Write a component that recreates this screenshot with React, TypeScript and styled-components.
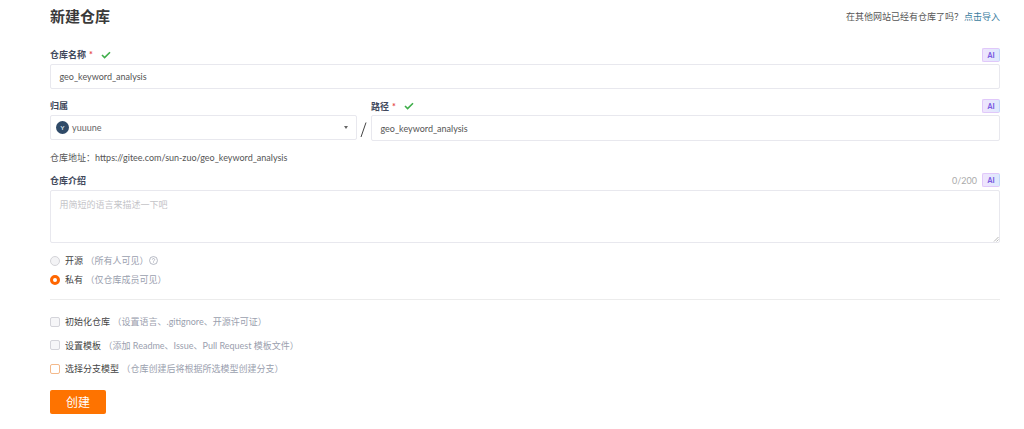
import React from "react";
import styled, { createGlobalStyle } from "styled-components";

const Global = createGlobalStyle`
  html, body { margin: 0; padding: 0; background: #fff; }
  body { font-family: Lato, "Noto Sans CJK SC", sans-serif; color: #40485b; overflow: hidden; }
`;
const Page = styled.div`
  width: 950px; height: 429px; margin-left: 50px; display: flex; flex-direction: column;
`;
const Header = styled.div`
  height: 35px; margin-top: -1px; display: flex; justify-content: space-between; align-items: center;
`;
const Title = styled.h1`
  margin: 0; font-size: 15px; font-weight: 700; color: #3a3a3a; line-height: 35px;
`;
const ImportNote = styled.div`
  font-size: 9px; color: #555;
`;
const ImportLink = styled.span`
  color: #3b7c9e; margin-left: 1px;
`;
const LabelRow = styled.div`
  height: 16px; display: flex; align-items: center; justify-content: space-between;
`;
const FirstLabelRow = styled(LabelRow)`
  height: 13px; margin-top: 14px;
`;
const Label = styled.div`
  display: flex; align-items: center; font-size: 9px; font-weight: 700; color: #40485b;
`;
const Star = styled.span`
  color: #e5484d; margin-left: 3px;
`;
const Check = styled.svg`
  width: 10px; height: 8px; margin-left: 8px;
`;
const Badge = styled.div`
  width: 18px; height: 14px; box-sizing: border-box; border: 1px solid #e0c8fa; border-right-color: #c4d8fb; border-radius: 2px;
  background: linear-gradient(90deg, #f0e4fd, #dde9fd); color: #7a5be0; font-size: 7px; font-weight: 900;
  display: flex; align-items: center; justify-content: center;
`;
const Counter = styled.span`
  font-size: 9px; color: #aaa; margin-right: 5px;
`;
const Side = styled.div`
  display: flex; align-items: center;
`;
const Field = styled.div<{ $h?: number; $gap?: number }>`
  height: ${(p) => p.$h ?? 25}px; margin-top: ${(p) => p.$gap ?? 0}px; box-sizing: border-box; border: 1px solid #e8e8ee; border-radius: 2px;
  display: flex; align-items: center; padding: 0 8.5px; font-size: 9px; color: #555; background: #fff; position: relative;
`;
const Split = styled.div`
  display: flex; margin-top: 9px; height: 44px;
`;
const OwnerCol = styled.div`
  width: 307px; display: flex; flex-direction: column;
`;
const PathCol = styled.div`
  flex: 1; display: flex; flex-direction: column;
`;
const OwnerLabel = styled.div`
  height: 16px; margin-top: -1px; display: flex; align-items: center; font-size: 9px; font-weight: 700;
`;
const Select = styled.div`
  height: 25px; margin-top: 2px; box-sizing: border-box; border: 1px solid #e8e8ee; border-radius: 2px; display: flex; align-items: center;
  padding: 0 5px; font-size: 9px; color: #666;
`;
const Avatar = styled.div`
  width: 13px; height: 13px; border-radius: 50%; background: #2f4a68; color: #dfe6ee; font-size: 6px; font-weight: 700;
  display: flex; align-items: center; justify-content: center; margin-right: 3px;
`;
const Caret = styled.div`
  margin-left: auto; margin-right: 3px; width: 0; height: 0; border-left: 2.5px solid transparent; border-right: 2.5px solid transparent; border-top: 3px solid #666;
`;
const Slash = styled.div`
  width: 14px; display: flex; align-items: flex-end; justify-content: center;
`;
const SlashIcon = styled.svg`
  width: 9px; height: 16px; margin-bottom: 4px;
`;
const Address = styled.div`
  height: 15px; margin-top: 8px; display: flex; align-items: center; font-size: 9px; color: #555;
`;
const IntroRow = styled(LabelRow)`
  margin-top: 7px;
`;
const TextArea = styled(Field)`
  align-items: flex-start; padding-top: 7px; color: #c4c4c8;
`;
const Grip = styled.svg`
  position: absolute; right: 0; bottom: 0; width: 6px; height: 6px;
`;
const Options = styled.div`
  margin-top: 11px; display: flex; flex-direction: column; gap: 5.5px;
`;
const Line = styled.div`
  height: 13.5px; display: flex; align-items: center; font-size: 9px; color: #444;
`;
const Hint = styled.span`
  color: #9aa0ae; margin-left: 2.5px;
`;
const Radio = styled.span<{ $on?: boolean }>`
  width: 10px; height: 10px; border-radius: 50%; box-sizing: border-box; margin-right: 5px;
  ${(p) => (p.$on ? "border: 3px solid #f60; background: #fff;" : "border: 1px solid #d4d4d8; background: #f3f3f5;")}
`;
const Help = styled.svg`
  width: 9px; height: 9px; margin-left: 0;
`;
const Rule = styled.div`
  height: 1px; background: #ececec; margin-top: 12px;
`;
const Checks = styled.div`
  margin-top: 15.5px; display: flex; flex-direction: column; gap: 10px;
`;
const Box = styled.span<{ $hot?: boolean }>`
  width: 10px; height: 10px; border-radius: 2px; box-sizing: border-box; margin-right: 5px;
  background: ${(p) => (p.$hot ? "#fff" : "#f6f6f8")};
  border: 1px solid ${(p) => (p.$hot ? "#f4b98a" : "#d4d4da")};
`;
const CreateButton = styled.button`
  margin-top: 14px; width: 56px; height: 24px; border: 0; border-radius: 2px; background: #fe7300; color: #fff;
  font-family: inherit; font-size: 12px; padding: 0;
`;

const Tick = () => (
  <Check viewBox="0 0 10 8"><path d="M1 4l2.6 2.6L9 1.2" fill="none" stroke="#3fae4a" strokeWidth="1.6" /></Check>
);

export default function App() {
  return (
    <>
      <Global />
      <Page>
        <Header>
          <Title>新建仓库</Title>
          <ImportNote>在其他网站已经有仓库了吗&#xFF1F;<ImportLink>点击导入</ImportLink></ImportNote>
        </Header>
        <FirstLabelRow>
          <Label>仓库名称<Star>*</Star><Tick /></Label>
          <Badge>AI</Badge>
        </FirstLabelRow>
        <Field $gap={3}>geo_keyword_analysis</Field>
        <Split>
          <OwnerCol>
            <OwnerLabel>归属</OwnerLabel>
            <Select><Avatar>Y</Avatar>yuuune<Caret /></Select>
          </OwnerCol>
          <Slash>
            <SlashIcon viewBox="0 0 9 16"><path d="M6 0.5L1 15" stroke="#444" strokeWidth="1" fill="none" /></SlashIcon>
          </Slash>
          <PathCol>
            <LabelRow>
              <Label>路径<Star>*</Star><Tick /></Label>
              <Badge>AI</Badge>
            </LabelRow>
            <Field $h={26} $gap={1}>geo_keyword_analysis</Field>
          </PathCol>
        </Split>
        <Address>仓库地址&#xFF1A;https://gitee.com/sun-zuo/geo_keyword_analysis</Address>
        <IntroRow>
          <Label>仓库介绍</Label>
          <Side><Counter>0/200</Counter><Badge>AI</Badge></Side>
        </IntroRow>
        <TextArea $h={53} $gap={2}>
          用简短的语言来描述一下吧
          <Grip viewBox="0 0 6 6"><path d="M5.5 1L1 5.5M5.5 3.5L3.5 5.5" stroke="#999" strokeWidth=".7" /></Grip>
        </TextArea>
        <Options>
          <Line>
            <Radio />开源<Hint>&#xFF08;所有人可见&#xFF09;</Hint>
            <Help viewBox="0 0 10 10">
              <circle cx="5" cy="5" r="4.4" fill="none" stroke="#9aa0ae" strokeWidth=".8" />
              <path d="M3.7 4a1.3 1.3 0 1 1 1.9 1.2C5.1 5.5 5 5.7 5 6.2M5 7v.7" fill="none" stroke="#9aa0ae" strokeWidth=".8" />
            </Help>
          </Line>
          <Line><Radio $on />私有<Hint>&#xFF08;仅仓库成员可见&#xFF09;</Hint></Line>
        </Options>
        <Rule />
        <Checks>
          <Line><Box />初始化仓库<Hint>&#xFF08;设置语言、.gitignore、开源许可证&#xFF09;</Hint></Line>
          <Line><Box />设置模板<Hint>&#xFF08;添加 Readme、Issue、Pull Request 模板文件&#xFF09;</Hint></Line>
          <Line><Box $hot />选择分支模型<Hint>&#xFF08;仓库创建后将根据所选模型创建分支&#xFF09;</Hint></Line>
        </Checks>
        <CreateButton>创建</CreateButton>
      </Page>
    </>
  );
}
